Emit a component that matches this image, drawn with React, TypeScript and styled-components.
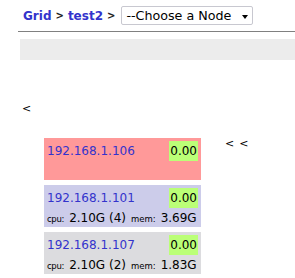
import React from "react";
import styled, { createGlobalStyle } from "styled-components";

const Global = createGlobalStyle`
  body {
    margin: 0;
    background: #ffffff;
    font-family: "DejaVu Sans", Verdana, sans-serif;
    color: #000;
  }
`;

const Page = styled.div`
  display: flex;
  flex-direction: column;
  width: 295px;
  overflow: hidden;
`;

const Header = styled.div`
  display: flex;
  align-items: center;
  gap: 4px;
  padding: 6px 0 0 23px;
  height: 19px;
  font-size: 12px;
  font-weight: bold;
`;

const Crumb = styled.a`
  color: #3333cc;
  text-decoration: none;
`;

const Sep = styled.span`
  color: #222;
  font-size: 10px;
`;

const Select = styled.div`
  display: flex;
  align-items: center;
  justify-content: space-between;
  box-sizing: border-box;
  width: 132px;
  height: 19px;
  margin-left: 2px;
  padding: 0 4px 0 4px;
  border: 1px solid #c8c8d0;
  border-radius: 2px;
  background: #fff;
  font-weight: normal;
  font-size: 12.7px;
  color: #000;
`;

const Arrow = styled.span`
  width: 0;
  height: 0;
  border-left: 3.5px solid transparent;
  border-right: 3.5px solid transparent;
  border-top: 4px solid #000;
  margin-top: 2px;
`;

const Rule = styled.div`
  margin: 6px 0 0 18px;
  height: 1px;
  background: #808080;
`;

const Bar = styled.div`
  margin: 7px 0 0 20px;
  height: 21px;
  background: #ececec;
`;

const Back = styled.div`
  margin: 42px 0 0 22px;
  font-size: 11px;
  line-height: 14px;
`;

const Main = styled.div`
  display: flex;
  align-items: flex-start;
  margin: 22px 0 0 44px;
  gap: 24px;
`;

const Column = styled.div`
  display: flex;
  flex-direction: column;
  gap: 5px;
  width: 157px;
`;

const Node = styled.div<{ $bg: string }>`
  display: flex;
  flex-direction: column;
  gap: 3px;
  box-sizing: border-box;
  height: 42px;
  padding: 3px 3px 0 3px;
  background: ${(p) => p.$bg};
`;

const Row = styled.div`
  display: flex;
  align-items: center;
  justify-content: space-between;
`;

const Ip = styled.a`
  color: #3333cc;
  font-size: 12px;
  text-decoration: none;
`;

const Load = styled.span`
  background: #bbff77;
  font-size: 12px;
  line-height: 20px;
  padding: 0 1px;
`;

const Stats = styled.div`
  display: flex;
  align-items: baseline;
  gap: 5px;
  font-size: 12px;
  line-height: 14px;
`;

const Stat = styled.span`
  display: flex;
  align-items: baseline;
`;

const Label = styled.span<{ $tight?: boolean }>`
  font-size: 8.5px;
  margin-right: 5px;
  letter-spacing: ${(p) => (p.$tight ? "-0.3px" : "0")};
`;

const Nav = styled.div`
  display: flex;
  gap: 5px;
  font-size: 11px;
  line-height: 14px;
  margin-top: -1px;
`;

type N = { ip: string; bg: string; stats?: [string, string] };

const nodes: N[] = [
  { ip: "192.168.1.106", bg: "#ff9999" },
  { ip: "192.168.1.101", bg: "#ccccea", stats: ["2.10G (4)", "3.69G"] },
  { ip: "192.168.1.107", bg: "#dcdcdf", stats: ["2.10G (2)", "1.83G"] },
];

export default function App() {
  return (
    <Page>
      <Global />
      <Header>
        <Crumb href="#">Grid</Crumb>
        <Sep>&gt;</Sep>
        <Crumb href="#">test2</Crumb>
        <Sep>&gt;</Sep>
        <Select>
          <span>--Choose a Node</span>
          <Arrow />
        </Select>
      </Header>
      <Rule />
      <Bar />
      <Back>&lt;</Back>
      <Main>
        <Column>
          {nodes.map((n) => (
            <Node key={n.ip} $bg={n.bg}>
              <Row>
                <Ip href="#">{n.ip}</Ip>
                <Load>0.00</Load>
              </Row>
              {n.stats && (
                <Stats>
                  <Stat>
                    <Label $tight>cpu:</Label>
                    {n.stats[0]}
                  </Stat>
                  <Stat>
                    <Label>mem:</Label>
                    {n.stats[1]}
                  </Stat>
                </Stats>
              )}
            </Node>
          ))}
        </Column>
        <Nav>
          <span>&lt;</span>
          <span>&lt;</span>
        </Nav>
      </Main>
    </Page>
  );
}
